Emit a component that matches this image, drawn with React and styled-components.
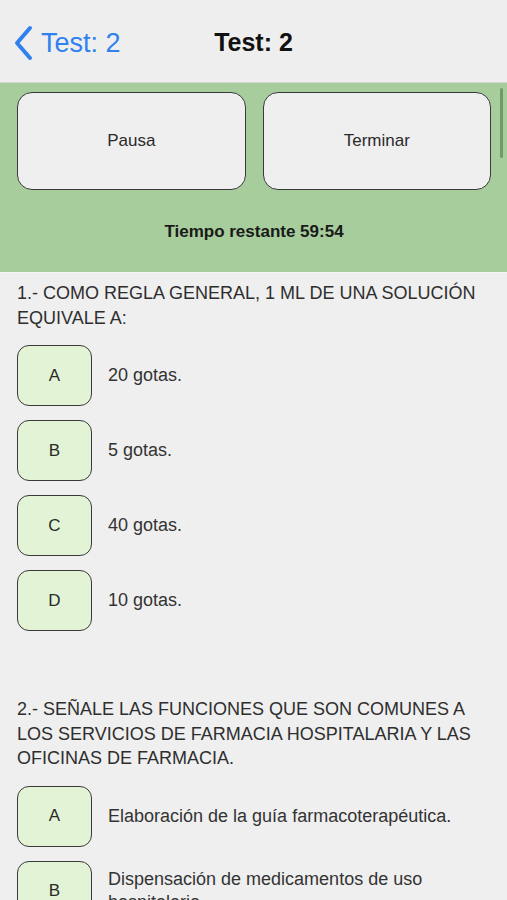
import React from 'react'
import styled, {createGlobalStyle} from 'styled-components'

const questions = [
    {
        title: '1.- COMO REGLA GENERAL, 1 ML DE UNA SOLUCIÓN EQUIVALE A:',
        options: ['20 gotas.', '5 gotas.', '40 gotas.', '10 gotas.'],
    },
    {
        title: '2.- SEÑALE LAS FUNCIONES QUE SON COMUNES A LOS SERVICIOS DE FARMACIA HOSPITALARIA Y LAS OFICINAS DE FARMACIA.',
        options: [
            'Elaboración de la guía farmacoterapéutica.',
            'Dispensación de medicamentos de uso hospitalario.',
            'Adquisición y custodia de medicamentos.',
            'Todas son correctas.',
        ],
    },
]

const LETTERS = ['A', 'B', 'C', 'D']

export default function App() {
    return (
        <>
            <GlobalStyle />
            <Screen>
                <NavBar>
                    <BackButton>
                        <svg width="22" height="36" viewBox="0 0 22 36">
                            <polyline points="18,3 5,18 18,33" fill="none" stroke="#2f82ee" strokeWidth="4" strokeLinecap="round" strokeLinejoin="round" />
                        </svg>
                        <BackLabel>Test: 2</BackLabel>
                    </BackButton>
                    <NavTitle>Test: 2</NavTitle>
                </NavBar>

                <ControlPanel>
                    <ButtonRow>
                        <PanelButton>Pausa</PanelButton>
                        <PanelButton>Terminar</PanelButton>
                    </ButtonRow>
                    <Timer>Tiempo restante 59:54</Timer>
                    <ScrollThumb />
                </ControlPanel>

                {questions.map((q, i) => (
                    <Question key={i} first={i === 0}>
                        <QuestionText>{q.title}</QuestionText>
                        {q.options.map((opt, j) => (
                            <OptionRow key={j}>
                                <LetterBox>{LETTERS[j]}</LetterBox>
                                <OptionText>{opt}</OptionText>
                            </OptionRow>
                        ))}
                    </Question>
                ))}
            </Screen>
        </>
    )
}

const GlobalStyle = createGlobalStyle`
    html, body {
        margin: 0;
        padding: 0;
        background: #efefef;
        overflow: hidden;
    }
    * {
        box-sizing: border-box;
    }
`
const Screen = styled.div`
    width: 507px;
    height: 900px;
    overflow: hidden;
    background: #efefef;
    font-family: "Liberation Sans", Arial, sans-serif;
    color: #333;
`
const NavBar = styled.div`
    position: relative;
    height: 83px;
    display: flex;
    align-items: center;
    justify-content: center;
    background: #eeeeee;
    border-bottom: 1px solid #d4d4d4;
`
const BackButton = styled.div`
    position: absolute;
    left: 12px;
    top: 25px;
    display: flex;
    align-items: center;
    gap: 7px;
`
const BackLabel = styled.span`
    font-size: 27px;
    color: #2f82ee;
    line-height: 36px;
`
const NavTitle = styled.div`
    font-size: 25px;
    font-weight: bold;
    color: #111;
    margin-top: 2px;
`
const ControlPanel = styled.div`
    position: relative;
    height: 190px;
    background: #a6cd9b;
    border-bottom: 1px solid #f6f6f6;
    padding: 9px 16px 0 17px;
`
const ButtonRow = styled.div`
    display: grid;
    grid-template-columns: 1fr 1fr;
    gap: 17px;
`
const PanelButton = styled.div`
    height: 98px;
    display: flex;
    align-items: center;
    justify-content: center;
    background: #efefef;
    border: 1.5px solid #3a3a3a;
    border-radius: 15px;
    font-size: 17px;
    color: #2a2a2a;
`
const Timer = styled.div`
    margin-top: 32px;
    text-align: center;
    font-size: 17px;
    font-weight: bold;
    color: #1a1a1a;
`
const ScrollThumb = styled.div`
    position: absolute;
    right: 4px;
    top: 5px;
    width: 3px;
    height: 70px;
    border-radius: 2px;
    background: #6d9a66;
`
const Question = styled.div`
    padding: ${props => props.first ? '8px' : '52px'} 17px 0 17px;
`
const QuestionText = styled.div`
    font-size: 18px;
    line-height: 24.5px;
    color: #2e2e2e;
    margin-bottom: 15px;
`
const OptionRow = styled.div`
    display: flex;
    align-items: center;
    gap: 16px;
    margin-bottom: 14px;
`
const LetterBox = styled.div`
    flex: 0 0 75px;
    height: 61px;
    display: flex;
    align-items: center;
    justify-content: center;
    background: #e3f4d6;
    border: 1.5px solid #3a3a3a;
    border-radius: 12px;
    font-size: 17px;
    color: #2a2a2a;
`
const OptionText = styled.div`
    font-size: 18px;
    line-height: 23px;
    color: #333;
`
